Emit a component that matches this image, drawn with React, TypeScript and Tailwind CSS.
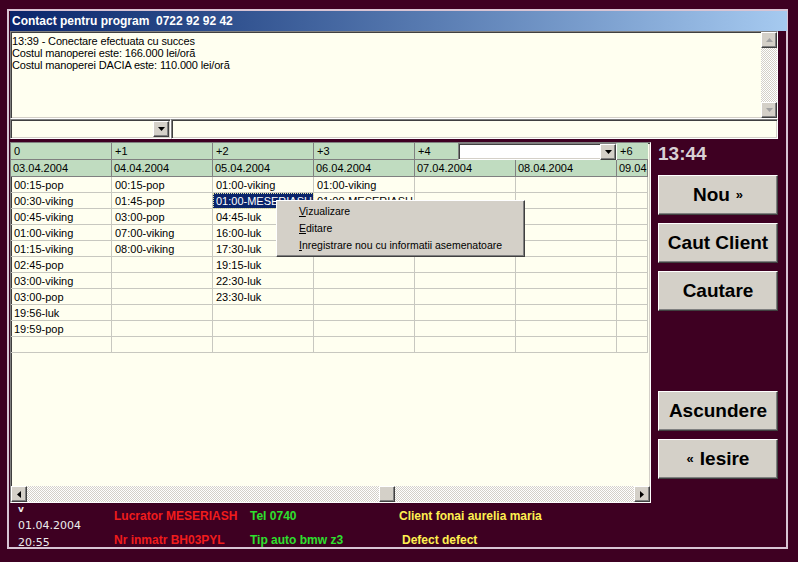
import React from "react";

// classic win98 bevels
const raised =
  "bg-[#d4d0c8] border border-t-white border-l-white border-r-[#404040] border-b-[#404040] shadow-[inset_-1px_-1px_0_#808080]";
const sunken =
  "border border-t-[#808080] border-l-[#808080] border-r-white border-b-white shadow-[inset_1px_1px_0_#404040,inset_-1px_-1px_0_#d4d0c8]";
const dither =
  "bg-[image:repeating-conic-gradient(#d4d0c8_0%_25%,#ffffff_0%_50%)] bg-[length:2px_2px]";

const colWidths = ["w-[101px]", "w-[101px]", "w-[101px]", "w-[101px]", "w-[101px]", "w-[101px]", "w-[31px]"];

const dates = ["03.04.2004", "04.04.2004", "05.04.2004", "06.04.2004", "07.04.2004", "08.04.2004", "09.04.2004"];

const columns: string[][] = [
  ["00:15-pop", "00:30-viking", "00:45-viking", "01:00-viking", "01:15-viking", "02:45-pop", "03:00-viking", "03:00-pop", "19:56-luk", "19:59-pop"],
  ["00:15-pop", "01:45-pop", "03:00-pop", "07:00-viking", "08:00-viking"],
  ["01:00-viking", "01:00-MESERIASH", "04:45-luk", "16:00-luk", "17:30-luk", "19:15-luk", "22:30-luk", "23:30-luk"],
  ["01:00-viking", "01:00-MESERIASH"],
  [],
  [],
  [],
];

function Arrow({dir, color = "#000"}: {dir: "up" | "down" | "left" | "right"; color?: string}) {
  const pts = {
    down: "0,0 7,0 3.5,4",
    up: "0,4 7,4 3.5,0",
    left: "4,0 4,7 0,3.5",
    right: "0,0 0,7 4,3.5",
  }[dir];
  const horiz = dir === "left" || dir === "right";
  return (
    <svg width={horiz ? 4 : 7} height={horiz ? 7 : 4} viewBox={horiz ? "0 0 4 7" : "0 0 7 4"}>
      <polygon points={pts} fill={color} />
    </svg>
  );
}

function ScrollBtn({dir, color}: {dir: "up" | "down" | "left" | "right"; color?: string}) {
  return (
    <div className={`w-[16px] h-[16px] shrink-0 flex items-center justify-center ${raised}`}>
      <Arrow dir={dir} color={color} />
    </div>
  );
}

function BigButton({children}: {children: React.ReactNode}) {
  return (
    <div className={`w-[120px] h-[40px] flex items-center justify-center text-[19px] font-bold text-black ${raised}`}>
      {children}
    </div>
  );
}

function Grid() {
  const rows = Array.from({length: 11}, (_, r) => r);
  return (
    <div className={`relative w-[641px] h-[361px] bg-[#fffff0] flex flex-col ${sunken}`}>
      {/* header: day offsets */}
      <div className="flex h-[17px] shrink-0">
        {["0", "+1", "+2", "+3"].map((t) => (
          <div key={t} className="w-[101px] bg-[#c0dcc0] border-r border-b border-[#808080] px-[3px] leading-[17px]">
            {t}
          </div>
        ))}
        <div className="w-[43px] bg-[#c0dcc0] border-b border-[#808080] px-[3px] leading-[17px]">+4</div>
        <div className={`w-[159px] bg-white flex justify-end items-stretch ${sunken}`}>
          <ScrollBtn dir="down" />
        </div>
        <div className="w-[31px] bg-[#c0dcc0] border-b border-[#808080] px-[3px] leading-[17px]">+6</div>
      </div>
      {/* header: dates */}
      <div className="flex h-[17px] shrink-0">
        {dates.map((d, i) => (
          <div
            key={d}
            className={`${colWidths[i]} bg-[#c0dcc0] border-r border-b border-[#808080] px-[2px] leading-[17px] whitespace-nowrap overflow-hidden`}
          >
            {d}
          </div>
        ))}
      </div>
      {rows.map((r) => (
        <div key={r} className="flex h-[16px] shrink-0">
          {columns.map((col, c) => {
            const selected = c === 2 && r === 1;
            return (
              <div
                key={c}
                className={`${colWidths[c]} border-r border-b border-[#c8c8c0] whitespace-nowrap overflow-hidden leading-[16px] ${
                  selected ? "bg-[#0a246a] text-white outline-1 outline-dotted outline-[#e8e8a0] -outline-offset-1" : ""
                } px-[3px]`}
              >
                {col[r] ?? ""}
              </div>
            );
          })}
        </div>
      ))}
      <div className="flex-1" />
      {/* horizontal scrollbar */}
      <div className="flex h-[16px] shrink-0">
        <ScrollBtn dir="left" />
        <div className={`flex-1 ${dither}`}>
          <div className={`w-[16px] h-[16px] ml-[352px] ${raised}`} />
        </div>
        <ScrollBtn dir="right" />
      </div>

      {/* context menu */}
      <div className={`absolute left-[265px] top-[57px] w-[249px] h-[57px] pt-[2px] ${raised} text-black text-[10.5px]`}>
        <div className="h-[17px] leading-[17px] pl-[22px]">
          <u>V</u>izualizare
        </div>
        <div className="h-[17px] leading-[17px] pl-[22px]">
          <u>E</u>ditare
        </div>
        <div className="h-[17px] leading-[17px] pl-[22px]">
          <u>I</u>nregistrare nou cu informatii asemenatoare
        </div>
      </div>
    </div>
  );
}

export default function App() {
  return (
    <div className="w-[798px] h-[562px] overflow-hidden bg-[#3e0022] pt-[9px] pl-[7px] font-[Liberation_Sans,Arial,sans-serif] text-[11px] text-black">
      <div className="w-[781px] h-[540px] border-2 border-[#d8c4d4] flex flex-col pl-[1px]">
        {/* title bar */}
        <div className="h-[20px] shrink-0 w-[777px] bg-gradient-to-r from-[#0a246a] to-[#a6caf0] pl-[2px] text-white text-[12px] font-bold leading-[20px] whitespace-pre">
          Contact pentru program  0722 92 92 42
        </div>

        {/* log */}
        <div className={`w-[768px] h-[88px] shrink-0 bg-[#fffff0] flex ${sunken}`}>
          <div className="flex-1 pl-[1px] pt-[3px] leading-[12px] tracking-[-0.15px]">
            <div>13:39 - Conectare efectuata cu succes</div>
            <div>Costul manoperei este: 166.000 lei/orã</div>
            <div>Costul manoperei DACIA este: 110.000 lei/orã</div>
          </div>
          <div className="w-[16px] flex flex-col">
            <ScrollBtn dir="up" color="#a0a0a0" />
            <div className={`flex-1 ${dither}`} />
            <ScrollBtn dir="down" color="#a0a0a0" />
          </div>
        </div>

        {/* combo + input */}
        <div className="flex h-[20px] shrink-0 w-[768px]">
          <div className={`w-[161px] bg-[#fffff0] flex justify-end p-[1px] ${sunken}`}>
            <ScrollBtn dir="down" />
          </div>
          <div className={`flex-1 bg-[#fffff0] ${sunken}`} />
        </div>

        {/* grid + buttons */}
        <div className="flex mt-[3px] shrink-0">
          <Grid />
          <div className="ml-[7px] flex flex-col">
            <div className="mt-[2px] h-[20px] leading-[20px] text-[19px] font-bold text-[#d8d0d4]">13:44</div>
            <div className="mt-[11px] flex flex-col gap-[8px]">
              <BigButton>
                Nou <span className="text-[13px] ml-[6px]">»</span>
              </BigButton>
              <BigButton>Caut Client</BigButton>
              <BigButton>Cautare</BigButton>
            </div>
            <div className="mt-[80px] flex flex-col gap-[8px]">
              <BigButton>Ascundere</BigButton>
              <BigButton>
                <span className="text-[13px] mr-[6px]">«</span> Iesire
              </BigButton>
            </div>
          </div>
        </div>

        {/* status */}
        <div className="flex-1 flex text-[12px] font-bold">
          <div className="w-[104px] pl-[8px] pt-[1px] font-[DejaVu_Sans,sans-serif] font-normal text-[11px] text-[#ececec]">
            <div className="h-[11px] leading-[11px] text-[9px] font-bold">v</div>
            <div className="mt-[4px] leading-[13px]">01.04.2004</div>
            <div className="mt-[4px] leading-[13px]">20:55</div>
          </div>
          <div className="w-[136px] pt-[6px] text-[#f01c1c]">
            <div className="leading-[14px]">Lucrator MESERIASH</div>
            <div className="mt-[10px] leading-[14px]">Nr inmatr BH03PYL</div>
          </div>
          <div className="w-[149px] pt-[6px] text-[#2ee02e]">
            <div className="leading-[14px]">Tel 0740</div>
            <div className="mt-[10px] leading-[14px]">Tip auto bmw z3</div>
          </div>
          <div className="pt-[6px] text-[#fff050]">
            <div className="leading-[14px]">Client fonai aurelia maria</div>
            <div className="mt-[10px] leading-[14px] pl-[3px]">Defect defect</div>
          </div>
        </div>
      </div>
    </div>
  );
}
